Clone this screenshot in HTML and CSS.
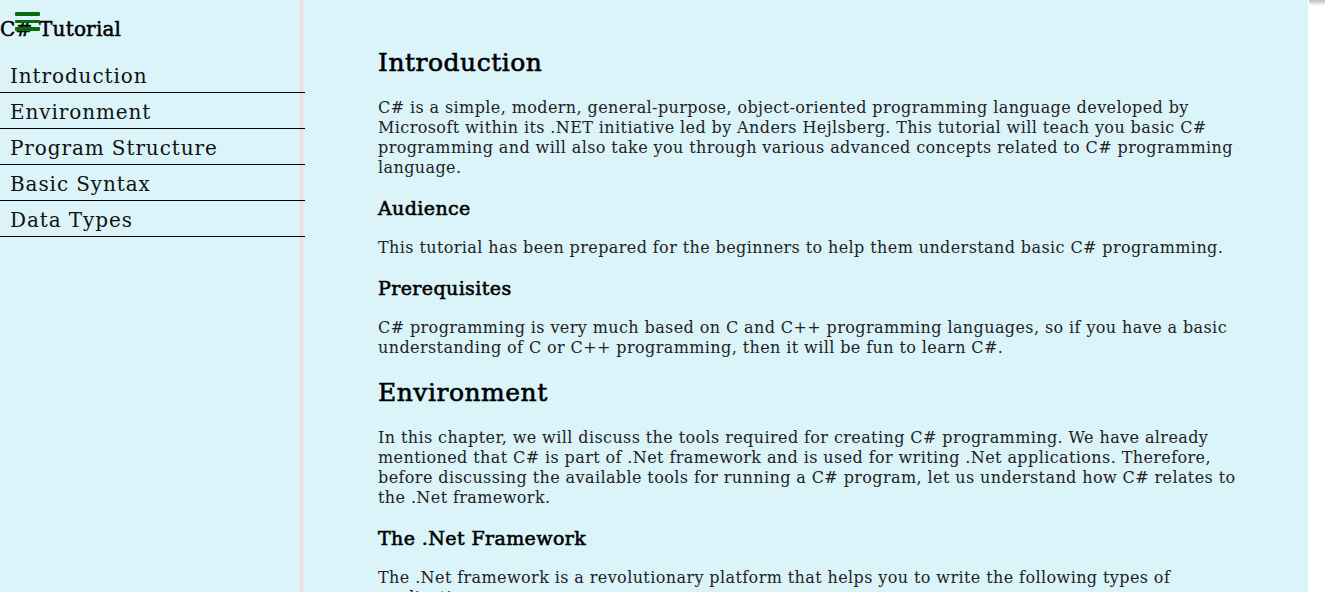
FILE: index.html
```html
<!DOCTYPE html>
<html lang="en">
<head>
<meta charset="utf-8">
<title>C# Tutorial</title>
<link rel="stylesheet" href="styles.css">
</head>
<body>
<div class="page">
  <aside class="sidebar">
    <div class="menu-icon" aria-label="menu"><span></span><span></span><span></span></div>
    <div class="brand">C# Tutorial</div>
    <nav class="nav">
      <a class="nav-link" href="#intro">Introduction</a>
      <a class="nav-link" href="#env">Environment</a>
      <a class="nav-link" href="#structure">Program Structure</a>
      <a class="nav-link" href="#syntax">Basic Syntax</a>
      <a class="nav-link" href="#types">Data Types</a>
    </nav>
  </aside>
  <main class="content">
    <section id="intro">
      <h2>Introduction</h2>
      <p>C# is a simple, modern, general-purpose, object-oriented programming language developed by Microsoft within its .NET initiative led by Anders Hejlsberg. This tutorial will teach you basic C# programming and will also take you through various advanced concepts related to C# programming language.</p>
      <h3>Audience</h3>
      <p>This tutorial has been prepared for the beginners to help them understand basic C# programming.</p>
      <h3>Prerequisites</h3>
      <p>C# programming is very much based on C and C++ programming languages, so if you have a basic understanding of C or C++ programming, then it will be fun to learn C#.</p>
    </section>
    <section id="env">
      <h2>Environment</h2>
      <p>In this chapter, we will discuss the tools required for creating C# programming. We have already mentioned that C# is part of .Net framework and is used for writing .Net applications. Therefore, before discussing the available tools for running a C# program, let us understand how C# relates to the .Net framework.</p>
      <h3>The .Net Framework</h3>
      <p>The .Net framework is a revolutionary platform that helps you to write the following types of applications:</p>
    </section>
  </main>
</div>
<div class="scroll-strip"><div class="scroll-cap"></div></div>
</body>
</html>
```
FILE: styles.css
```css
html, body {
  margin: 0;
  padding: 0;
  height: 100%;
  overflow: hidden;
  background: #ffffff;
}
body {
  display: flex;
  font-family: "DejaVu Serif", "Liberation Serif", serif;
  color: #222222;
}
.page {
  flex: 1;
  display: flex;
  height: 592px;
  background: #daf4f9;
  overflow: hidden;
}
.scroll-strip {
  width: 17px;
  flex: none;
  background: #ffffff;
}
.scroll-cap {
  height: 6px;
  background: linear-gradient(#bdbdbd, #ffffff);
  margin-left: 1px;
}
.sidebar {
  position: relative;
  width: 300px;
  flex: none;
  border-right: 3px solid #f6d9d8;
}
.menu-icon {
  position: absolute;
  left: 15px;
  top: 12px;
  width: 25px;
  display: flex;
  flex-direction: column;
  gap: 4px;
  z-index: 1;
}
.menu-icon span {
  display: block;
  height: 3.5px;
  background: #0a6b0a;
  border-radius: 1px;
}
.brand {
  font-size: 20px;
  line-height: 26px;
  padding-top: 16px;
  color: #000;
  height: 41px;
  letter-spacing: 0.2px;
  -webkit-text-stroke: 0.5px #000;
}
.nav {
  display: flex;
  flex-direction: column;
  width: 305px;
}
.nav-link {
  display: block;
  height: 35px;
  line-height: 38px;
  padding-left: 10px;
  font-size: 20px;
  letter-spacing: 0.9px;
  color: #111;
  text-decoration: none;
  border-bottom: 1px solid #000;
}
.content {
  flex: 1;
  padding: 28px 52px 0 75px;
}
h2 {
  font-size: 25px;
  line-height: 30px;
  font-weight: normal;
  letter-spacing: 0.5px;
  -webkit-text-stroke: 0.6px #000;
  margin: 20px 0;
  color: #000;
}
h3 {
  font-size: 19px;
  line-height: 20px;
  font-weight: normal;
  letter-spacing: 0.4px;
  -webkit-text-stroke: 0.6px #000;
  margin: 20px 0;
  color: #000;
}
p {
  font-size: 16px;
  line-height: 20px;
  letter-spacing: 0.4px;
  margin: 20px 0;
}
```
